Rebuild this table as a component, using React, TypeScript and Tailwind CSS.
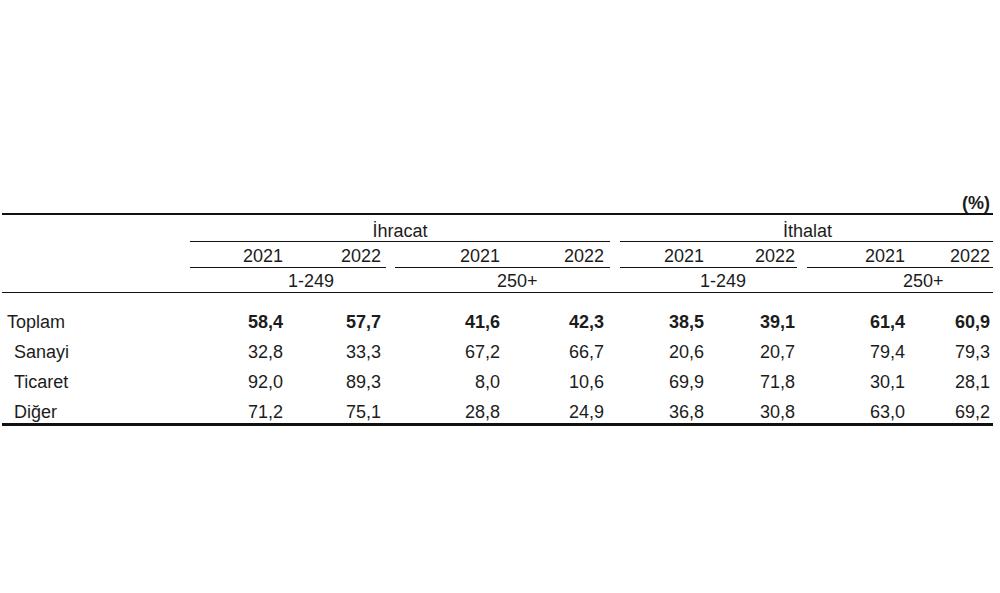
const cols =
  "grid grid-cols-[188px_98px_98px_9px_108px_107px_10px_88px_89px_10px_102px_84px]";

// right padding per data column so the numbers land where the table has them
const pad = [
  "pr-[5px]",
  "pr-[5px]",
  "pr-[3px]",
  "pr-[6px]",
  "pr-[4px]",
  "pr-[2px]",
  "pr-[4px]",
  "pr-[3px]",
];

const rows = [
  { label: "Toplam", bold: true, indent: false, v: ["58,4", "57,7", "41,6", "42,3", "38,5", "39,1", "61,4", "60,9"] },
  { label: "Sanayi", bold: false, indent: true, v: ["32,8", "33,3", "67,2", "66,7", "20,6", "20,7", "79,4", "79,3"] },
  { label: "Ticaret", bold: false, indent: true, v: ["92,0", "89,3", "8,0", "10,6", "69,9", "71,8", "30,1", "28,1"] },
  { label: "Diğer", bold: false, indent: true, v: ["71,2", "75,1", "28,8", "24,9", "36,8", "30,8", "63,0", "69,2"] },
];

function Cells({ values, bold }: { values: string[]; bold?: boolean }) {
  // data columns sit in pairs with a thin gap column between pairs
  const out: React.ReactNode[] = [];
  values.forEach((v, i) => {
    if (i > 0 && i % 2 === 0) out.push(<div key={"g" + i} />);
    out.push(
      <div key={i} className={`text-right ${pad[i]} ${bold ? "font-bold" : ""}`}>
        {v}
      </div>
    );
  });
  return <>{out}</>;
}

export default function App() {
  return (
    <div className="min-h-screen bg-white pt-[190px] text-[18px] text-[#1c1c1c] font-['Liberation_Sans',Arial,sans-serif]">
      <div className="ml-[2px] w-[991px]">
        {/* unit */}
        <div className="pt-[3px] leading-[20px] pr-[3px] text-right font-bold border-b-2 border-[#111]">
          (%)
        </div>

        {/* group header */}
        <div className={`${cols} pt-[6px] leading-[20px]`}>
          <div />
          <div className="col-span-5 text-center border-b border-[#111]">İhracat</div>
          <div />
          <div className="col-span-5 text-center pl-[2px] border-b border-[#111]">İthalat</div>
        </div>

        {/* years */}
        <div className={`${cols} leading-[20px]`}>
          <div />
          {["2021", "2022", "", "2021", "2022", "", "2021", "2022", "", "2021", "2022"].map((y, i) =>
            y === "" ? (
              <div key={i} />
            ) : (
              <div
                key={i}
                className={`text-right pt-[4px] pb-[1px] border-b border-[#111] ${pad[i - Math.floor(i / 3)]}`}
              >
                {y}
              </div>
            )
          )}
        </div>

        {/* firm size */}
        <div className={`${cols} pt-[3px] pb-[1px] leading-[20px] border-b border-[#111]`}>
          <div />
          <div className="col-span-2 pl-[98px]">1-249</div>
          <div />
          <div className="col-span-2 pl-[102px]">250+</div>
          <div />
          <div className="col-span-2 pl-[80px]">1-249</div>
          <div />
          <div className="col-span-2 pl-[96px]">250+</div>
        </div>

        {/* data */}
        <div className="pt-[14px] border-b-[3px] border-[#111]">
          {rows.map((r, i) => (
            <div
              key={r.label}
              className={`${cols} ${i === rows.length - 1 ? "pt-[5px] pb-[1px] leading-[20px]" : "leading-[30px]"}`}
            >
              <div className={r.indent ? "pl-[12px]" : "pl-[5px]"}>{r.label}</div>
              <Cells values={r.v} bold={r.bold} />
            </div>
          ))}
        </div>
      </div>
    </div>
  );
}
